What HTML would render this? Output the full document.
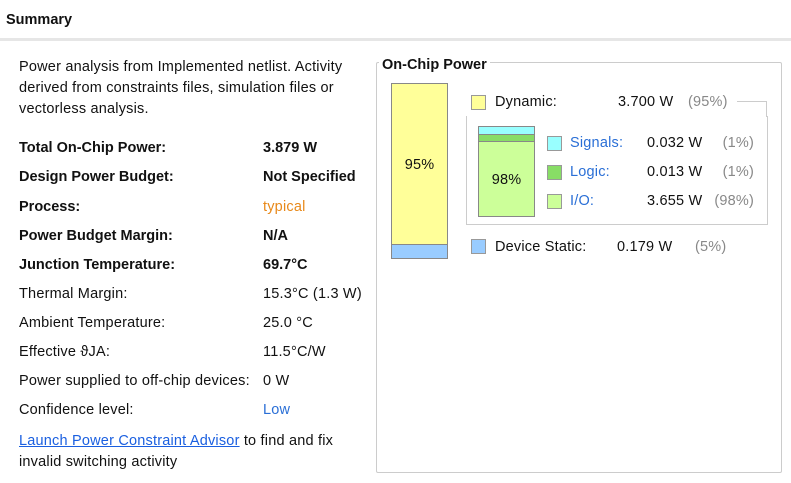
<!DOCTYPE html>
<html><head><style>
body{margin:0;width:791px;height:483px;background:#fff;font-family:"Liberation Sans",sans-serif;font-size:14.5px;letter-spacing:0.2px;color:#111;position:relative;overflow:hidden}
.a{position:absolute;white-space:nowrap;line-height:16px}
.b{font-weight:bold;letter-spacing:0}
.g{color:#888}
.bl{color:#2a6fd6}
.sw{position:absolute;width:13px;height:13px;border:1px solid #999}
</style></head><body>
<div class="a b" style="left:6px;top:12px">Summary</div>
<div style="position:absolute;left:0;top:38px;width:791px;height:3px;background:#e6e6e6"></div>

<div class="a" style="left:19px;top:59px">Power analysis from Implemented netlist. Activity</div>
<div class="a" style="left:19px;top:80px">derived from constraints files, simulation files or</div>
<div class="a" style="left:19px;top:101px">vectorless analysis.</div>

<div class="a b" style="left:19px;top:140px">Total On-Chip Power:</div><div class="a b" style="left:263px;top:140px">3.879 W</div>
<div class="a b" style="left:19px;top:169px">Design Power Budget:</div><div class="a b" style="left:263px;top:169px">Not Specified</div>
<div class="a b" style="left:19px;top:199px">Process:</div><div class="a" style="left:263px;top:199px;color:#e8891a">typical</div>
<div class="a b" style="left:19px;top:228px">Power Budget Margin:</div><div class="a b" style="left:263px;top:228px">N/A</div>
<div class="a b" style="left:19px;top:257px">Junction Temperature:</div><div class="a b" style="left:263px;top:257px">69.7°C</div>
<div class="a" style="left:19px;top:286px">Thermal Margin:</div><div class="a" style="left:263px;top:286px">15.3°C (1.3 W)</div>
<div class="a" style="left:19px;top:315px">Ambient Temperature:</div><div class="a" style="left:263px;top:315px">25.0 °C</div>
<div class="a" style="left:19px;top:344px">Effective ϑJA:</div><div class="a" style="left:263px;top:344px">11.5°C/W</div>
<div class="a" style="left:19px;top:373px">Power supplied to off-chip devices:</div><div class="a" style="left:263px;top:373px">0 W</div>
<div class="a" style="left:19px;top:402px">Confidence level:</div><div class="a bl" style="left:263px;top:402px">Low</div>
<div class="a" style="left:19px;top:433px"><span style="color:#1a5fe0;text-decoration:underline">Launch Power Constraint Advisor</span> to find and fix</div>
<div class="a" style="left:19px;top:454px">invalid switching activity</div>

<div style="position:absolute;left:376px;top:62px;width:404px;height:409px;border:1px solid #ccc;border-radius:2px"></div>
<div class="a b" style="left:379px;top:57px;background:#fff;padding:0 3px">On-Chip Power</div>

<div style="position:absolute;left:391px;top:83px;width:55px;height:174px;border:1px solid #888;background:#ffff99"></div>
<div style="position:absolute;left:392px;top:244px;width:55px;height:13px;border-top:1px solid #888;background:#99ccff"></div>
<div class="a" style="left:391px;top:157px;width:57px;text-align:center">95%</div>

<div class="sw" style="left:471px;top:95px;background:#ffff99"></div>
<div class="a" style="left:495px;top:94px">Dynamic:</div>
<div class="a" style="left:618px;top:94px">3.700 W</div>
<div class="a g" style="left:688px;top:94px">(95%)</div>
<div style="position:absolute;left:466px;top:116px;width:300px;height:108px;border:1px solid #ccc;border-top:none"></div>
<div style="position:absolute;left:737px;top:101px;width:30px;height:1px;background:#ccc"></div>
<div style="position:absolute;left:766px;top:101px;width:1px;height:16px;background:#ccc"></div>

<div style="position:absolute;left:478px;top:126px;width:55px;height:89px;border:1px solid #888;background:#ccff99"></div>
<div style="position:absolute;left:479px;top:127px;width:55px;height:7px;background:#99ffff;border-bottom:1px solid #888"></div>
<div style="position:absolute;left:479px;top:135px;width:55px;height:6px;background:#88dd66;border-bottom:1px solid #888"></div>
<div class="a" style="left:478px;top:172px;width:57px;text-align:center">98%</div>

<div class="sw" style="left:547px;top:136px;background:#99ffff"></div>
<div class="a bl" style="left:570px;top:135px">Signals:</div><div class="a" style="left:647px;top:135px">0.032 W</div><div class="a g" style="left:716px;top:135px;width:38px;text-align:right">(1%)</div>
<div class="sw" style="left:547px;top:165px;background:#88dd66"></div>
<div class="a bl" style="left:570px;top:164px">Logic:</div><div class="a" style="left:647px;top:164px">0.013 W</div><div class="a g" style="left:716px;top:164px;width:38px;text-align:right">(1%)</div>
<div class="sw" style="left:547px;top:194px;background:#ccff99"></div>
<div class="a bl" style="left:570px;top:193px">I/O:</div><div class="a" style="left:647px;top:193px">3.655 W</div><div class="a g" style="left:704px;top:193px;width:50px;text-align:right">(98%)</div>

<div class="sw" style="left:471px;top:239px;background:#99ccff"></div>
<div class="a" style="left:495px;top:239px">Device Static:</div>
<div class="a" style="left:617px;top:239px">0.179 W</div>
<div class="a g" style="left:695px;top:239px">(5%)</div>
</body></html>
